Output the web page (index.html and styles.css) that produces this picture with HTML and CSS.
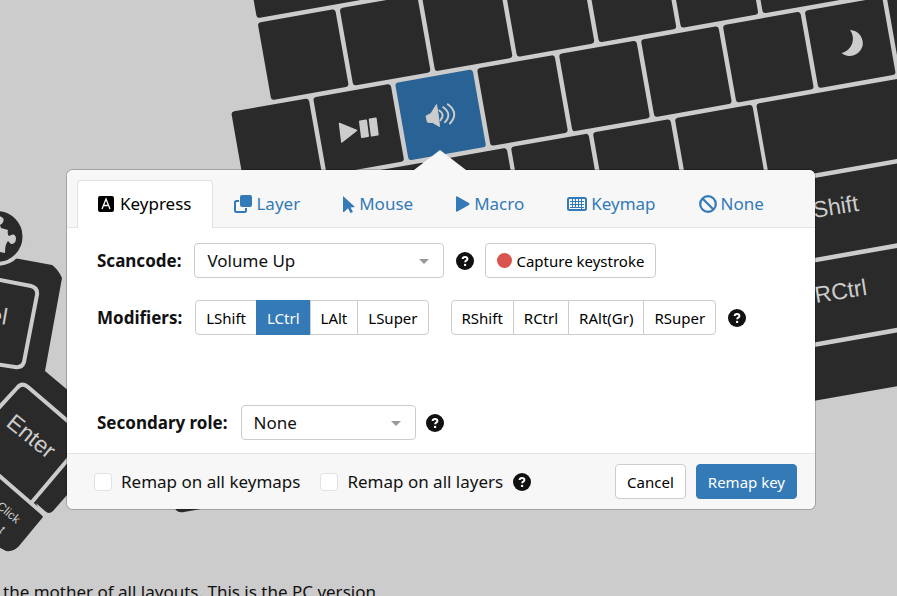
FILE: index.html
```html
<!DOCTYPE html>
<html lang="en">
<head>
<meta charset="utf-8">
<title>Keymap editor</title>
<link rel="stylesheet" href="styles.css">
</head>
<body>
<svg class="keyboard" aria-hidden="true">
  <!-- right half: one unit is 83.2, rotated by ten degrees -->
  <g class="keys" transform="translate(395 83) rotate(-10)">
    <rect x="-124.8" y="-166.4" width="162" height="78.7" rx="3"/>
    <rect x="41.6" y="-166.4" width="500" height="78.7" rx="3"/>
    <rect x="-124.8" y="-83.2" width="78.7" height="78.7" rx="3"/>
    <rect x="-41.6" y="-83.2" width="78.7" height="78.7" rx="3"/>
    <rect x="41.6" y="-83.2" width="78.7" height="78.7" rx="3"/>
    <rect x="124.8" y="-83.2" width="78.7" height="78.7" rx="3"/>
    <rect x="208" y="-83.2" width="78.7" height="78.7" rx="3"/>
    <rect x="291.2" y="-83.2" width="78.7" height="78.7" rx="3"/>
    <rect x="374.4" y="-83.2" width="162" height="78.7" rx="3"/>
    <rect x="-166.4" y="0" width="78.7" height="78.7" rx="3"/>
    <rect x="-83.2" y="0" width="78.7" height="78.7" rx="3"/>
    <rect class="selected" x="0" y="0" width="78.7" height="78.7" rx="3"/>
    <rect x="83.2" y="0" width="78.7" height="78.7" rx="3"/>
    <rect x="166.4" y="0" width="78.7" height="78.7" rx="3"/>
    <rect x="249.6" y="0" width="78.7" height="78.7" rx="3"/>
    <rect x="332.8" y="0" width="78.7" height="78.7" rx="3"/>
    <rect x="416" y="0" width="78.7" height="78.7" rx="3"/>
    <rect x="499.2" y="0" width="78.7" height="78.7" rx="3"/>
    <rect x="-146" y="83.2" width="78.7" height="78.7" rx="3"/>
    <rect x="-63" y="83.2" width="78.7" height="78.7" rx="3"/>
    <rect x="20" y="83.2" width="78.7" height="78.7" rx="3"/>
    <rect x="103" y="83.2" width="78.7" height="78.7" rx="3"/>
    <rect x="186.2" y="83.2" width="78.7" height="78.7" rx="3"/>
    <rect x="269.4" y="83.2" width="78.7" height="78.7" rx="3"/>
    <rect x="352" y="83.2" width="220" height="78.7" rx="3"/>
    <rect x="300" y="166.4" width="280" height="78.7" rx="3"/>
    <rect x="300" y="249.6" width="280" height="78.7" rx="3"/>
    <rect x="200" y="332.8" width="400" height="53" rx="3"/>
  </g>
  <g class="glyph">
    <path d="M339.500 123.500L356.500 130.500L341.800 142Z" stroke="#ccc" stroke-width="1.500" stroke-linejoin="round"/>
    <path d="M360 121.500L366 120.500L368 136L362 137ZM369.700 119.500L375.700 118.500L377.700 134.500L371.700 135.500Z" stroke="#ccc" stroke-width="2" stroke-linejoin="round"/>
    <path d="M426 116L431 113.500L436.500 104.500Q438.500 115 439.500 126.500L432.500 122.500L427.500 122.200Z" stroke="#ccc" stroke-width="1" stroke-linejoin="round"/>
    <path class="wave" d="M439.300 110.500Q445.500 114.500 440.300 120.300M443.200 107.200Q452.500 114 445 122.200M447.800 104.300Q459.500 113 450 123.500"/>
    <path d="M850 30A13 13 0 1 1 841.500 53A14.500 14.500 0 0 0 850 30Z"/>
    <text x="814" y="218" transform="rotate(-9 814 218)">Shift</text>
    <text x="816" y="303" transform="rotate(-9 816 303)">RCtrl</text>
  </g>
  <!-- left half: thumb cluster -->
  <path class="case" d="M-10 254L14 258L52 265Q58 269 62 278L45 371L70 392L110 430L67 495L53 511Q49 515 45 511L36 503L43 517L19 546Q14 552 6 551L-10 542Z"/>
  <path class="case" d="M171 504L177 511Q180 513 184 512L212 507Z"/>
  <path class="seam" d="M-5 279L31 286Q38 288 37 295L24 362Q22 368 15 367L-5 364M-5 412L17 388Q22 382 28 387L70 423M-5 472L48 518M32 502L70 457"/>
  <circle class="case" cx="-3" cy="236.500" r="27.500" stroke="#ccc" stroke-width="4"/>
  <path class="glyph" d="M-8 217Q-2 214 3 218Q5 222 0 225L1 228L8 230Q7 234 9 236Q15 232 16 238Q16 244 11 244L8 241Q5 244 5 253L-6 251Z"/>
  <g class="glyph">
    <text x="6" y="325" text-anchor="end" transform="rotate(10 6 325)">el</text>
    <text x="5" y="425" transform="rotate(39 5 425)">Enter</text>
    <text class="small" x="16" y="524" text-anchor="end" transform="rotate(40 16 524)">Click</text>
    <text class="small" x="1" y="534" text-anchor="end" transform="rotate(40 1 534)">t</text>
  </g>
</svg>

<main class="popover">
  <svg class="arrow" width="52" height="20" viewBox="0 0 52 20" aria-hidden="true"><path d="M0 20L26 0L52 20Z"/></svg>
  <nav class="tabs">
    <a class="tab active" href="#keypress"><svg width="16" height="16" viewBox="0 0 16 16" aria-hidden="true"><rect width="16" height="16" rx="2" fill="#000"/><path d="M4 13L8 3L12 13M5.400 9.500H10.600" fill="none" stroke="#fff" stroke-width="1.300"/></svg>Keypress</a>
    <a class="tab" href="#layer"><svg width="18" height="18" viewBox="0 0 18 18" aria-hidden="true"><rect x="6" y="0" width="12" height="12" rx="2"/><path d="M5 6H2.500Q1 6 1 7.500V15.500Q1 17 2.500 17H10.500Q12 17 12 15.500V13" fill="none" stroke="currentColor" stroke-width="2"/></svg>Layer</a>
    <a class="tab" href="#mouse"><svg width="12" height="17" viewBox="0 0 12 17" aria-hidden="true"><path d="M0 0L12 11L7.500 11.500L10 16L7.500 17L5 12.200L1 16V16H0Z"/></svg>Mouse</a>
    <a class="tab" href="#macro"><svg width="14" height="16" viewBox="0 0 14 16" aria-hidden="true"><path d="M0 1.300Q0 0 1.300 .4L13 7Q14 8 13 9L1.300 15.600Q0 16 0 14.700Z"/></svg>Macro</a>
    <a class="tab" href="#keymap"><svg width="20" height="14" viewBox="0 0 20 14" aria-hidden="true"><rect x="1" y="1" width="18" height="12" rx="1.500" fill="none" stroke="currentColor" stroke-width="2"/><path d="M3 4.500H17M3 7.500H17M3 10.500H17M5.500 2V10M8.500 2V10M11.500 2V10M14.500 2V12" fill="none" stroke="currentColor" stroke-width="1"/></svg>Keymap</a>
    <a class="tab" href="#none"><svg width="18" height="18" viewBox="0 0 18 18" aria-hidden="true"><circle cx="9" cy="9" r="7.800" fill="none" stroke="currentColor" stroke-width="2.200"/><path d="M3.500 3.500L14.500 14.500" stroke="currentColor" stroke-width="2.200"/></svg>None</a>
  </nav>
  <div class="content">
    <div class="row">
      <label class="name" for="scancode">Scancode:</label>
      <span class="dropdown wide"><select id="scancode"><option>Volume Up</option></select></span>
      <svg class="help" width="18" height="18" viewBox="0 0 18 18" aria-hidden="true"><circle cx="9" cy="9" r="9"/><path d="M6.600 7Q6.800 5 9 5Q11.400 5 11.400 7Q11.400 8.100 10.200 8.700Q9.200 9.200 9.200 10.300"/><circle class="dot" cx="9.100" cy="12.900" r="1.200"/></svg>
      <button class="button" type="button"><span class="record"></span>Capture keystroke</button>
    </div>
    <div class="row modifiers">
      <span class="name">Modifiers:</span>
      <div class="group">
        <button type="button">LShift</button><button class="on" type="button">LCtrl</button><button type="button">LAlt</button><button type="button">LSuper</button>
      </div>
      <div class="group">
        <button type="button">RShift</button><button type="button">RCtrl</button><button type="button">RAlt(Gr)</button><button type="button">RSuper</button>
      </div>
      <svg class="help" width="18" height="18" viewBox="0 0 18 18" aria-hidden="true"><circle cx="9" cy="9" r="9"/><path d="M6.600 7Q6.800 5 9 5Q11.400 5 11.400 7Q11.400 8.100 10.200 8.700Q9.200 9.200 9.200 10.300"/><circle class="dot" cx="9.100" cy="12.900" r="1.200"/></svg>
    </div>
    <div class="row">
      <label class="name" for="role">Secondary role:</label>
      <span class="dropdown"><select id="role"><option>None</option></select></span>
      <svg class="help" width="18" height="18" viewBox="0 0 18 18" aria-hidden="true"><circle cx="9" cy="9" r="9"/><path d="M6.600 7Q6.800 5 9 5Q11.400 5 11.400 7Q11.400 8.100 10.200 8.700Q9.200 9.200 9.200 10.300"/><circle class="dot" cx="9.100" cy="12.900" r="1.200"/></svg>
    </div>
  </div>
  <div class="actions">
    <label class="check"><input type="checkbox">Remap on all keymaps</label>
    <label class="check"><input type="checkbox">Remap on all layers</label>
    <svg class="help" width="18" height="18" viewBox="0 0 18 18" aria-hidden="true"><circle cx="9" cy="9" r="9"/><path d="M6.600 7Q6.800 5 9 5Q11.400 5 11.400 7Q11.400 8.100 10.200 8.700Q9.200 9.200 9.200 10.300"/><circle class="dot" cx="9.100" cy="12.900" r="1.200"/></svg>
    <button class="button cancel" type="button">Cancel</button>
    <button class="button primary" type="button">Remap key</button>
  </div>
</main>
<p class="description">the mother of all layouts. This is the PC version</p>
</body>
</html>
```
FILE: styles.css
```css
* { box-sizing: border-box; }

body {
  margin: 0;
  height: 100vh;
  overflow: hidden;
  position: relative;
  background: #ccc;
  color: #111;
  font: 17px/24px "Noto Sans", sans-serif;
}

.keyboard { position: absolute; inset: 0; width: 100%; height: 100%; }
.keys { fill: #2a2a2a; }
.keys .selected { fill: #296295; }
.glyph { fill: #ccc; }
.glyph text { font: 23px "Liberation Sans", sans-serif; }
.glyph .small { font-size: 12px; }
.wave { fill: none; stroke: #ccc; stroke-width: 2; stroke-linecap: round; }
.case { fill: #2a2a2a; }
.seam { fill: none; stroke: #ccc; stroke-width: 4; }

.popover {
  position: relative;
  margin: 169px 81px 0 66px;
  border: 1px solid rgba(0, 0, 0, 0.2);
  border-radius: 7px;
  background: #fff;
  background-clip: padding-box;
}

.arrow { position: absolute; top: -20px; left: 347px; fill: #f7f7f7; }

.tabs {
  display: flex;
  padding: 10px 10px 0;
  background: #f7f7f7;
  border-bottom: 1px solid #e5e5e5;
  border-radius: 6px 6px 0 0;
}

.tab {
  display: flex;
  align-items: center;
  gap: 4px;
  height: 47px;
  padding: 0 21px 0 20px;
  border: 1px solid transparent;
  border-bottom: 0;
  border-radius: 4px 4px 0 0;
  color: #337ab7;
  text-decoration: none;
}

.tab svg { fill: currentColor; }

.tab.active {
  height: 48px;
  margin-bottom: -1px;
  padding-bottom: 1px;
  gap: 6px;
  border-color: #dee2e6;
  background: #fff;
  color: #000;
}

.content { padding: 15px 30px 13px; }
.row { display: flex; align-items: center; height: 35px; }
.row + .row { margin-top: 22px; }
.row.modifiers + .row { margin-top: 70px; }
.name { margin-right: 13px; font-weight: 700; }

.dropdown { position: relative; width: 175px; height: 35px; }
.dropdown.wide { width: 250px; }

.dropdown select {
  width: 100%;
  height: 100%;
  padding: 0 12px;
  appearance: none;
  border: 1px solid #ccc;
  border-radius: 4px;
  background: #fff;
  color: #111;
  font: inherit;
}

.dropdown::after {
  content: "";
  position: absolute;
  top: 16px;
  right: 15px;
  border: 5px solid transparent;
  border-top-color: #999;
  border-bottom: 0;
}

.help { flex: none; margin: 0 11px 0 12px; fill: #111; }
.help path { fill: none; stroke: #fff; stroke-width: 2; }
.help .dot { fill: #fff; }
.dropdown:not(.wide) + .help { margin-left: 10px; }

.button {
  display: flex;
  align-items: center;
  height: 35px;
  padding: 0 11px;
  border: 1px solid #ccc;
  border-radius: 4px;
  background: #fff;
  color: #000;
  font: 15px/24px "Noto Sans", sans-serif;
}

.record {
  width: 15px;
  height: 15px;
  margin-right: 4px;
  border-radius: 50%;
  background: #d9534f;
}

.group { display: flex; }
.group + .group { margin-left: 22px; }

.group button {
  height: 35px;
  padding: 0 10px;
  border: 1px solid #ccc;
  background: #fff;
  color: #000;
  font: 15px/24px "Noto Sans", sans-serif;
}

.group button + button { margin-left: -1px; }
.group button:first-child { border-radius: 4px 0 0 4px; }
.group button:last-child { border-radius: 0 4px 4px 0; }

.group .on {
  border-color: #337ab7;
  background: #337ab7;
  color: #fff;
}

.actions {
  display: flex;
  align-items: center;
  padding: 10px 18px 10px 27px;
  border-top: 1px solid #e5e5e5;
  border-radius: 0 0 6px 6px;
  background: #f7f7f7;
}

.check { display: flex; align-items: center; }
.check + .check { margin-left: 20px; }

.check input {
  width: 18px;
  height: 18px;
  margin: 0 9px 0 0;
  appearance: none;
  border: 1px solid #dee2e6;
  border-radius: 4px;
  background: #fff;
}

.check + .help { margin-left: 10px; }
.cancel { margin-left: auto; }
.primary {
  margin-left: 10px;
  border-color: #337ab7;
  background: #337ab7;
  color: #fff;
}

.description { position: relative; margin: 70px 0 0 3px; }
```
